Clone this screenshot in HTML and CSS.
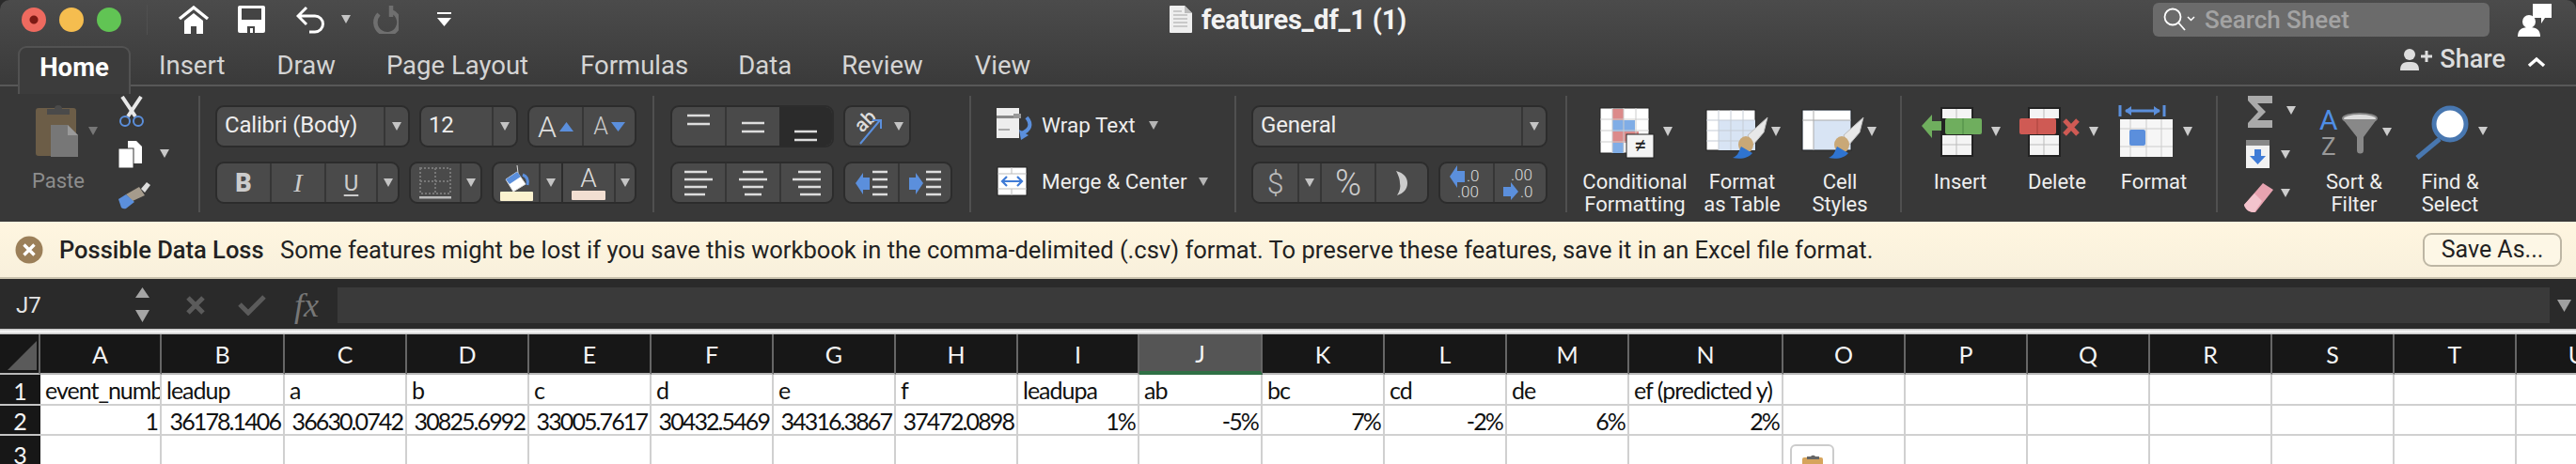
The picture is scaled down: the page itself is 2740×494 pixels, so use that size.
FILE: index.html
```html
<!DOCTYPE html>
<html lang="en">
<head>
<meta charset="utf-8">
<title>features_df_1 (1)</title>
<link rel="stylesheet" href="styles.css">
</head>
<body>
<div class="app">
  <header class="top">
    <div class="titlebar">
      <div class="lights"><span class="light red"></span><span class="light yellow"></span><span class="light green"></span></div>
      <span class="tb-sep"></span>
      <svg class="i-home" width="34" height="30" viewBox="0 0 34 30"><path d="M2 14 17 2l15 12" fill="none" stroke="#fff" stroke-width="3.4"/><path d="M7 16 17 8l10 8v14h-7v-8h-6v8H7z" fill="#fff"/></svg>
      <svg class="i-save" width="29" height="29" viewBox="0 0 29 29"><path d="M2 0h25a2 2 0 0 1 2 2v25a2 2 0 0 1-2 2H2a2 2 0 0 1-2-2V2a2 2 0 0 1 2-2z" fill="#fff"/><rect x="4" y="3" width="21" height="12" fill="#444"/><rect x="10" y="22" width="8" height="7" fill="#444"/><rect x="13" y="24" width="3" height="5" fill="#fff"/></svg>
      <svg class="i-undo" width="32" height="30" viewBox="0 0 32 30"><path d="M11 2 2 11l9 9M2 11h18a8 8 0 0 1 0 17h-6" fill="none" stroke="#fff" stroke-width="3"/></svg>
      <span class="caret c-undo"></span>
      <svg class="i-redo" width="30" height="30" viewBox="0 0 30 30"><path d="M9 9a12.500 12.500 0 1 0 13-3M22 0v12" fill="none" stroke="#6f6f6f" stroke-width="4.500"/></svg>
      <svg class="i-more" width="15" height="16" viewBox="0 0 15 16"><rect width="15" height="2" fill="#fff"/><path d="M0 6h15l-7.500 9z" fill="#fff"/></svg>
      <svg class="i-doc" width="24" height="29" viewBox="0 0 24 29"><path d="M1 0h15l8 8v20a1 1 0 0 1-1 1H1a1 1 0 0 1-1-1V1a1 1 0 0 1 1-1z" fill="#eee"/><path d="M16 0v8h8z" fill="#bbb"/><path d="M4 6h9M4 10h15M4 14h15M4 18h15M4 22h15" stroke="#bdbdbd" stroke-width="1.500"/></svg>
      <span class="doc-title">features_df_1 (1)</span>
      <div class="search">
        <svg width="34" height="26" viewBox="0 0 34 26"><circle cx="10" cy="10" r="8.500" fill="none" stroke="#fff" stroke-width="1.800"/><path d="m16 16 7 8" stroke="#fff" stroke-width="1.800"/><path d="m26 10 3.500 3.500L33 10" fill="none" stroke="#fff" stroke-width="1.500"/></svg>
        <span class="search-text">Search Sheet</span>
      </div>
      <svg class="i-person" width="36" height="36" viewBox="0 0 36 36"><path d="M16 1h20v15h-7l-4 6v-6h-9z" fill="#fff"/><circle cx="12" cy="20" r="7" fill="#fff"/><path d="M0 36c0-8 5-10 12-10s12 2 12 10z" fill="#fff"/></svg>
    </div>
    <div class="tabrow">
      <nav class="tabs">
        <span class="tab active">Home</span>
        <span class="tab t-insert">Insert</span>
        <span class="tab t-draw">Draw</span>
        <span class="tab t-page">Page Layout</span>
        <span class="tab t-form">Formulas</span>
        <span class="tab t-data">Data</span>
        <span class="tab t-rev">Review</span>
        <span class="tab t-view">View</span>
      </nav>
      <div class="share">
        <svg width="34" height="24" viewBox="0 0 34 24"><circle cx="10" cy="7" r="6" fill="#ddd"/><path d="M0 24c0-8 4-9 10-9s10 1 10 9z" fill="#ddd"/><path d="M22 9h12M28 3v12" stroke="#ddd" stroke-width="3"/></svg>
        <span class="share-text">Share</span>
        <svg class="i-chev" width="20" height="12" viewBox="0 0 20 12"><path d="m2 10 8-7 8 7" fill="none" stroke="#fff" stroke-width="3.500"/></svg>
      </div>
    </div>
  </header>

  <section class="ribbon">
    <div class="group g-clip">
      <div class="paste">
        <svg width="48" height="60" viewBox="0 0 48 60"><rect x="0" y="7" width="43" height="51" rx="3" fill="#6c5d47"/><path d="M12 12V8h8a4 4 0 0 1 8 0h8v6H12z" fill="#4a4a4a"/><path d="M16 25h18l11 11v23H16z" fill="#777"/><path d="M34 25v11h11z" fill="#9a9a9a"/></svg>
        <span class="paste-label">Paste</span>
      </div>
      <span class="caret dim c-paste"></span>
      <div class="clip-tools">
        <svg width="54" height="34" viewBox="0 0 54 34"><path d="M4 1l14 21M24 1 10 22" stroke="#e8e8e8" stroke-width="4"/><circle cx="7" cy="27" r="5" fill="none" stroke="#5b8fdc" stroke-width="2"/><circle cx="21" cy="27" r="5" fill="none" stroke="#5b8fdc" stroke-width="2"/></svg>
        <svg width="54" height="30" viewBox="0 0 54 30"><path d="M10 0h9l6 6v18H10z" fill="#fff"/><rect x="0" y="8" width="16" height="21" fill="#fff" stroke="#333"/><path d="M44 9h10l-5 9z" fill="#c8c8c8"/></svg>
        <svg width="54" height="30" viewBox="0 0 54 30"><path d="M24 7l6-7 4 3-6 8z" fill="#ddd"/><path d="M8 13 22 5l6 9-13 6z" fill="#a59b8c"/><path d="M0 18l8-5 9 8-9 7a6 6 0 0 1-5-1z" fill="#5b8fdc"/></svg>
      </div>
    </div>

    <div class="group g-font">
      <div class="rows">
        <div class="row">
          <div class="box"><span class="cell w177 txt">Calibri (Body)</span><span class="cell w26 sep"><span class="caret"></span></span></div>
          <div class="box"><span class="cell w75 txt">12</span><span class="cell w26 sep"><span class="caret"></span></span></div>
          <div class="box">
            <span class="cell w56 gp"><span class="big-a">A</span><svg width="15" height="10" viewBox="0 0 15 10"><path d="M7.500 0 15 10H0z" fill="#5b8fdc"/></svg></span>
            <span class="cell w56 sep gp"><span class="small-a">A</span><svg width="15" height="10" viewBox="0 0 15 10"><path d="M0 0h15L7.500 10z" fill="#5b8fdc"/></svg></span>
          </div>
        </div>
        <div class="row">
          <div class="box">
            <span class="cell w56 bold">B</span>
            <span class="cell w58 sep ital">I</span>
            <span class="cell w55 sep under">U</span>
            <span class="cell w23 sep"><span class="caret"></span></span>
          </div>
          <div class="box">
            <span class="cell w52"><svg width="36" height="36" viewBox="0 0 36 36"><rect x="2" y="2" width="32" height="27" fill="none" stroke="#777" stroke-width="2" stroke-dasharray="2 2"/><path d="M18 2v27M2 16h32" stroke="#777" stroke-width="2" stroke-dasharray="2 2"/><rect x="1" y="32" width="34" height="2.500" fill="#bbb"/></svg></span>
            <span class="cell w22 sep"><span class="caret"></span></span>
          </div>
          <div class="box">
            <span class="cell w48"><svg width="38" height="38" viewBox="0 0 38 38"><path d="M20 0l1 8M8 15l12-8 9 13-13 8z" fill="#fff" stroke="#ddd"/><path d="M8 15l12-8 4 5-12 8z" fill="#5b8fdc"/><path d="M26 10c5 2 6 6 5 11" fill="none" stroke="#5b8fdc" stroke-width="3"/><rect x="2" y="28" width="35" height="10" rx="1" fill="#fbf2cf"/></svg></span>
            <span class="cell w24 sep"><span class="caret"></span></span>
            <span class="cell w56 sep dark gp col"><span class="under-a">A</span><span class="swatch"></span></span>
            <span class="cell w22 sep"><span class="caret"></span></span>
          </div>
        </div>
      </div>
    </div>

    <div class="group g-align">
      <div class="rows">
        <div class="row">
          <div class="box nop">
            <span class="cell w56"><svg width="24" height="36" viewBox="0 0 24 36"><path d="M0 6h24M0 15h24" stroke="#ddd" stroke-width="2.500"/></svg></span>
            <span class="cell w58 sep"><svg width="24" height="36" viewBox="0 0 24 36"><path d="M0 14h24M0 23h24" stroke="#ddd" stroke-width="2.500"/></svg></span>
            <span class="cell w56 sel"><svg width="24" height="36" viewBox="0 0 24 36"><path d="M0 23h24M0 32h24" stroke="#ddd" stroke-width="2.500"/></svg></span>
          </div>
          <div class="box">
            <span class="cell w68 gp-o">
              <svg width="36" height="40" viewBox="0 0 36 40"><text class="ab" transform="translate(12 27) rotate(-45)">ab</text><path d="m10 38 21-25M23 13h9v9" fill="none" stroke="#5b8fdc" stroke-width="2"/></svg>
              <span class="caret"></span>
            </span>
          </div>
        </div>
        <div class="row">
          <div class="box nop">
            <span class="cell w56"><svg width="30" height="28" viewBox="0 0 30 28"><path d="M0 2h24M0 10h30M0 18h24M0 26h22" stroke="#ddd" stroke-width="2.500"/></svg></span>
            <span class="cell w58 sep"><svg width="30" height="28" viewBox="0 0 30 28"><path d="M4 2h22M0 10h30M4 18h22M6 26h18" stroke="#ddd" stroke-width="2.500"/></svg></span>
            <span class="cell w56 sep"><svg width="30" height="28" viewBox="0 0 30 28"><path d="M6 2h24M0 10h30M6 18h24M8 26h22" stroke="#ddd" stroke-width="2.500"/></svg></span>
          </div>
          <div class="box">
            <span class="cell w56"><svg width="34" height="30" viewBox="0 0 34 30"><path d="M8 4v5h7v13H8v5L0 15z" fill="#5b8fdc"/><path d="M18 3h16M18 11h16M18 19h16M18 27h16" stroke="#ddd" stroke-width="2.500"/></svg></span>
            <span class="cell w56 sep"><svg width="34" height="30" viewBox="0 0 34 30"><path d="M7 4v5H0v13h7v5l8-12z" fill="#5b8fdc"/><path d="M18 3h16M18 11h16M18 19h16M18 27h16" stroke="#ddd" stroke-width="2.500"/></svg></span>
          </div>
        </div>
      </div>
    </div>

    <div class="group g-wrap">
      <div class="rows spaced">
        <div class="wrow">
          <svg width="40" height="36" viewBox="0 0 40 36"><rect width="24" height="32" fill="#eee"/><rect y="8" width="18" height="3" fill="#888"/><rect x="2" y="22" width="12" height="2" fill="#aaa"/><path d="M18 6h8v5h-8z" fill="#999"/><path d="M32 10c6 7 4 14-6 17" fill="none" stroke="#5b8fdc" stroke-width="4"/><path d="M24 23l2 11 8-5z" fill="#5b8fdc"/></svg>
          <span class="wtext">Wrap Text</span><span class="caret dim-l c-wrap"></span>
        </div>
        <div class="wrow">
          <svg width="40" height="32" viewBox="0 0 40 32"><rect x="1" y="1" width="31" height="30" fill="#fff" stroke="#222"/><path d="M1 8h31M16 1v7M1 24h31M16 24v7" stroke="#bbb"/><path d="M6 16h21M11 11l-5 5 5 5M22 11l5 5-5 5" fill="none" stroke="#3f7bd6" stroke-width="2.200"/></svg>
          <span class="wtext">Merge &amp; Center</span><span class="caret dim-l c-merge"></span>
        </div>
      </div>
    </div>

    <div class="group g-num">
      <div class="rows">
        <div class="row">
          <div class="box"><span class="cell w285 txt">General</span><span class="cell w26 sep"><span class="caret"></span></span></div>
        </div>
        <div class="row">
          <div class="box">
            <span class="cell w47 cur">$</span>
            <span class="cell w24 sep"><span class="caret"></span></span>
            <span class="cell w58 sep pct">%</span>
            <span class="cell w56 sep"><svg width="16" height="30" viewBox="0 0 16 30"><path d="M2 2c8 2 12 7 12 13 0 6-4 11-11 13 3-5 4-9 3-13 0-4-1-7-4-13z" fill="#ccc"/></svg></span>
          </div>
          <div class="box">
            <span class="cell w56 dec"><svg width="36" height="41" viewBox="0 -2 36 41"><path d="M8 0v6h8v12H8v6L0 12z" fill="#5b8fdc"/><text class="dtx" x="18" y="17">.0</text><text class="dtx" x="8" y="34">.00</text></svg></span>
            <span class="cell w56 sep dec"><svg width="36" height="41" viewBox="0 -2 36 41"><text class="dtx" x="8" y="16">.00</text><path d="M8 18v5H0v10h8v4l8-9z" fill="#5b8fdc"/><text class="dtx" x="18" y="34">.0</text></svg></span>
          </div>
        </div>
      </div>
    </div>

    <div class="group g-styles">
      <div class="big w114">
        <svg width="114" height="60" viewBox="0 0 114 60">
          <rect x="20" y="3" width="52" height="48" fill="#fff" stroke="#222"/>
          <rect x="33" y="4" width="12" height="12" fill="#dc8a8a"/><rect x="33" y="16" width="24" height="12" fill="#80ade6"/><rect x="33" y="28" width="28" height="12" fill="#dc8a8a"/><rect x="33" y="40" width="12" height="11" fill="#80ade6"/>
          <path d="M33 3v48M45 3v48M58 3v48M20 15h52M20 27h52M20 39h52" stroke="#ccc" stroke-width="1"/>
          <rect x="48" y="31" width="29" height="25" fill="#f4f4f4" stroke="#222"/>
          <text class="ne" x="62.500" y="51">≠</text>
          <path d="M87 23h10l-5 10z" fill="#ccc"/>
        </svg>
        <span class="lbl">Conditional<br>Formatting</span>
      </div>
      <div class="big w114">
        <svg width="114" height="60" viewBox="0 0 114 60">
          <rect x="19" y="5" width="52" height="43" fill="#fff" stroke="#222"/>
          <rect x="32" y="16" width="39" height="32" fill="#d8e4f4"/>
          <path d="M32 5v43M45 5v43M58 5v43M19 16h52M19 27h52M19 38h52" stroke="#c5ccd5" stroke-width="1"/>
          <path d="M63 32 84 13 80 29 68 43z" fill="#e8e8e8" stroke="#bbb"/>
          <ellipse cx="61" cy="42" rx="8" ry="9" fill="#c9a877"/>
          <path d="M47 56c6-2 7-8 9-12l12 7c-4 5-12 7-21 5z" fill="#2f74d0"/>
          <path d="M88 23h10l-5 10z" fill="#ccc"/>
        </svg>
        <span class="lbl">Format<br>as Table</span>
      </div>
      <div class="big w94">
        <svg width="94" height="60" viewBox="0 0 94 60">
          <rect x="7" y="5" width="52" height="43" fill="#d8e4f4" stroke="#222"/>
          <rect x="8" y="6" width="50" height="10" fill="#fff"/><rect x="8" y="6" width="11" height="41" fill="#fff"/>
          <path d="M19 5v43M7 16h52" stroke="#aaa" stroke-width="1"/>
          <path d="M51 32 72 13 68 29 56 43z" fill="#e8e8e8" stroke="#bbb"/>
          <ellipse cx="49" cy="42" rx="8" ry="9" fill="#c9a877"/>
          <path d="M35 56c6-2 7-8 9-12l12 7c-4 5-12 7-21 5z" fill="#2f74d0"/>
          <path d="M76 23h10l-5 10z" fill="#ccc"/>
        </svg>
        <span class="lbl">Cell<br>Styles</span>
      </div>
    </div>

    <div class="group g-cells">
      <div class="big w104">
        <svg width="104" height="60" viewBox="0 0 104 60">
          <rect x="31" y="2" width="35" height="53" fill="#222"/><rect x="33" y="4" width="31" height="10" fill="#f4f4f4"/><rect x="33" y="32" width="31" height="21" fill="#f4f4f4"/><path d="M48 4v10M48 32v21M33 42h31" stroke="#bbb"/>
          <rect x="36" y="14" width="39" height="17" rx="2" fill="#6fae5e"/><path d="M55 14v17" stroke="#4f8a45"/>
          <path d="M11 22 22 10v7h10v10H22v8z" fill="#6fae5e"/>
          <path d="M85 23h10l-5 10z" fill="#ccc"/>
        </svg>
        <span class="lbl">Insert</span>
      </div>
      <div class="big w102">
        <svg width="102" height="60" viewBox="0 0 102 60">
          <rect x="20" y="2" width="35" height="53" fill="#222"/><rect x="22" y="4" width="31" height="10" fill="#f4f4f4"/><rect x="22" y="32" width="31" height="21" fill="#f4f4f4"/><path d="M37 4v10M37 32v21M22 42h31" stroke="#bbb"/>
          <rect x="11" y="14" width="39" height="17" rx="2" fill="#cf5a54"/><path d="M30 14v17" stroke="#a8423d"/>
          <path d="m59 16 14 15M73 16 59 31" stroke="#cf5a54" stroke-width="5"/>
          <path d="M85 23h10l-5 10z" fill="#ccc"/>
        </svg>
        <span class="lbl">Delete</span>
      </div>
      <div class="big w104">
        <svg width="104" height="60" viewBox="0 0 104 60">
          <path d="M16 0v12M63 0v12" stroke="#5b8fdc" stroke-width="3"/><path d="M22 6h36" stroke="#5b8fdc" stroke-width="3"/><path d="M28 1l-7 5 7 5zM52 1l7 5-7 5z" fill="#5b8fdc"/>
          <rect x="16" y="15" width="56" height="40" fill="#f6f6f6"/><path d="M27 15v40M44 15v40M60 15v40M16 25h56M16 44h56" stroke="#ccc"/>
          <rect x="26" y="26" width="17" height="17" rx="2" fill="#5b8fdc"/>
          <path d="M83 23h10l-5 10z" fill="#ccc"/>
        </svg>
        <span class="lbl">Format</span>
      </div>
    </div>

    <div class="group g-edit">
      <div class="edit-tools">
        <svg width="70" height="40" viewBox="0 0 70 40"><path d="M11 0h26v8H21l9 9-9 9h16v8H11v-5l11-12-11-12z" fill="#aaa"/><path d="M52 11h10l-5 9z" fill="#ccc"/></svg>
        <svg width="70" height="40" viewBox="0 0 70 40"><rect x="9" y="5" width="25" height="30" fill="#f2f2f2"/><rect x="9" y="5" width="25" height="6" fill="#888"/><path d="M18 15h7v7h5l-8.500 9L13 22h5z" fill="#3f7bd6"/><path d="M46 16h10l-5 9z" fill="#ccc"/></svg>
        <svg width="70" height="40" viewBox="0 0 70 40"><path d="M7 32 27 9l11 7-19 24c-6 1-11-3-12-8z" fill="#e7a3b0"/><path d="M7 32l11-12 8 8-8 12c-5 0-10-3-11-8z" fill="#f3c4cd"/><path d="M46 15h10l-5 9z" fill="#ccc"/></svg>
      </div>
      <div class="big w108">
        <svg width="108" height="60" viewBox="0 0 108 60">
          <text class="sa" x="17" y="26">A</text><text class="sz" x="19" y="53">Z</text>
          <ellipse cx="60" cy="14" rx="18" ry="5" fill="#ddd" stroke="#888" stroke-width="2"/>
          <path d="M42 15h36L64 34v14a3 3 0 0 1-7 0V34z" fill="#888"/>
          <path d="M84 24h10l-5 9z" fill="#ccc"/>
        </svg>
        <span class="lbl">Sort &amp;<br>Filter</span>
      </div>
      <div class="big w96">
        <svg width="96" height="60" viewBox="0 0 96 60">
          <circle cx="48" cy="20" r="17" fill="#fff" stroke="#4877b0" stroke-width="5"/>
          <path d="m37 36-24 20" stroke="#4877b0" stroke-width="5"/>
          <path d="M78 23h10l-5 9z" fill="#ccc"/>
        </svg>
        <span class="lbl">Find &amp;<br>Select</span>
      </div>
    </div>
  </section>

  <section class="banner">
    <svg class="i-warn" width="30" height="30" viewBox="0 0 30 30"><circle cx="15" cy="15" r="14.500" fill="#9b7f59"/><path d="m9.500 9.500 11 11M20.500 9.500l-11 11" stroke="#fff" stroke-width="3.400"/></svg>
    <strong class="b-title">Possible Data Loss</strong>
    <span class="b-text">Some features might be lost if you save this workbook in the comma-delimited (.csv) format. To preserve these features, save it in an Excel file format.</span>
    <button class="saveas" type="button">Save As...</button>
  </section>

  <section class="formula">
    <span class="namebox">J7</span>
    <svg class="i-spin" width="15" height="38" viewBox="0 0 15 38"><path d="M7.500 0 15 11H0zM0 24h15L7.500 37z" fill="#a5a5a5"/></svg>
    <svg class="i-x" width="22" height="22" viewBox="0 0 22 22"><path d="m3 3 16 16M19 3 3 19" stroke="#5b5b5b" stroke-width="5"/></svg>
    <svg class="i-ok" width="30" height="22" viewBox="0 0 30 22"><path d="m2 10 9 9L28 2" fill="none" stroke="#5b5b5b" stroke-width="5"/></svg>
    <span class="fx">fx</span>
    <div class="finput"></div>
    <svg class="i-fdown" width="15" height="13" viewBox="0 0 15 13"><path d="M0 0h15L7.500 13z" fill="#a0a0a0"/></svg>
  </section>

  <div class="splitter"></div>

  <section class="sheet">
    <div class="hd corner"><svg width="31" height="31" viewBox="0 0 31 31"><path d="M31 0v31H0z" fill="#5a5a5a"/></svg></div>
    <div class="hd">A</div><div class="hd">B</div><div class="hd">C</div><div class="hd">D</div><div class="hd">E</div><div class="hd">F</div><div class="hd">G</div><div class="hd">H</div><div class="hd">I</div><div class="hd selcol">J</div><div class="hd">K</div><div class="hd">L</div><div class="hd">M</div><div class="hd">N</div><div class="hd">O</div><div class="hd">P</div><div class="hd">Q</div><div class="hd">R</div><div class="hd">S</div><div class="hd">T</div><div class="hd">U</div>

    <div class="rh">1</div>
    <div class="c">event_number</div><div class="c">leadup</div><div class="c">a</div><div class="c">b</div><div class="c">c</div><div class="c">d</div><div class="c">e</div><div class="c">f</div><div class="c">leadupa</div><div class="c">ab</div><div class="c">bc</div><div class="c">cd</div><div class="c">de</div><div class="c">ef (predicted y)</div><div class="c"></div><div class="c"></div><div class="c"></div><div class="c"></div><div class="c"></div><div class="c"></div><div class="c"></div>

    <div class="rh">2</div>
    <div class="c r">1</div><div class="c r">36178.1406</div><div class="c r">36630.0742</div><div class="c r">30825.6992</div><div class="c r">33005.7617</div><div class="c r">30432.5469</div><div class="c r">34316.3867</div><div class="c r">37472.0898</div><div class="c r">1%</div><div class="c r">-5%</div><div class="c r">7%</div><div class="c r">-2%</div><div class="c r">6%</div><div class="c r">2%</div><div class="c"></div><div class="c"></div><div class="c"></div><div class="c"></div><div class="c"></div><div class="c"></div><div class="c"></div>

    <div class="rh">3</div>
    <div class="c"></div><div class="c"></div><div class="c"></div><div class="c"></div><div class="c"></div><div class="c"></div><div class="c"></div><div class="c"></div><div class="c"></div><div class="c"></div><div class="c"></div><div class="c"></div><div class="c"></div><div class="c"></div><div class="c"></div><div class="c"></div><div class="c"></div><div class="c"></div><div class="c"></div><div class="c"></div><div class="c"></div>

    <div class="pastepop"><svg width="30" height="22" viewBox="0 0 30 22"><rect x="3" y="6" width="22" height="18" rx="2" fill="#d6a45c"/><path d="M8 8V5h4a3 3 0 0 1 5 0h4v3z" fill="#666"/><rect x="14" y="14" width="14" height="10" fill="#fff" stroke="#666"/></svg></div>
  </section>
</div>
</body>
</html>
```

FILE: styles.css
```css
* { box-sizing: border-box; }
html, body { margin: 0; padding: 0; }
body { width: 2740px; height: 494px; overflow: hidden; background: #2a2a2a; font-family: Roboto, "Liberation Sans", sans-serif; }
.app { width: 2740px; height: 494px; display: flex; flex-direction: column; overflow: hidden; }
svg { display: block; flex: none; }

.caret { display: inline-block; width: 0; height: 0; border-left: 5px solid transparent; border-right: 5px solid transparent; border-top: 9px solid #c4c4c4; flex: none; }
.caret.dim { border-top-color: #777; }
.caret.dim-l { border-top-color: #b5b5b5; }

/* title bar */
.top { height: 92px; background: linear-gradient(#4b4b4b, #3a3a3a); border-bottom: 2px solid #585858; border-radius: 10px 10px 0 0; flex: none; }
.titlebar { height: 41px; display: flex; align-items: center; }
.lights { display: flex; gap: 14px; margin-left: 23px; }
.light { width: 26px; height: 26px; border-radius: 50%; }
.light.red { background: radial-gradient(circle, #7d1a14 0 4px, #ee6a5f 5px); }
.light.yellow { background: #f5bd4f; }
.light.green { background: #61c454; }
.tb-sep { width: 1px; height: 32px; margin-left: 27px; background: #505050; }
.i-home { margin-left: 32px; }
.i-save { margin-left: 30px; }
.i-undo { margin-left: 33px; }
.c-undo { margin-left: 16px; }
.i-redo { margin-left: 21px; }
.i-more { margin-left: 41px; }
.i-doc { margin-left: 764px; }
.doc-title { margin-left: 10px; width: 217px; font-size: 29px; font-weight: 700; color: #f2f2f2; white-space: nowrap; letter-spacing: -.2px; }
.search { margin-left: 795px; width: 358px; height: 36px; background: #6b6b6b; border-radius: 6px; display: flex; align-items: center; padding-left: 11px; }
.search-text { margin-left: 10px; font-size: 26px; font-weight: 500; color: #a3a3a3; }
.i-person { margin-left: 30px; }

.tabrow { height: 49px; display: flex; align-items: stretch; }
.tabs { display: flex; margin-left: 19px; }
.tab { font-size: 27.500px; color: #d4d4d4; line-height: 40px; padding-top: 9px; white-space: nowrap; }
.tab.active { width: 120px; height: 51px; margin-top: 8px; padding-top: 0; line-height: 42px; text-align: center; color: #fff; font-weight: 700; background: #3c3c3c; border: 2px solid #525252; border-bottom: 0; border-radius: 9px 9px 0 0; position: relative; z-index: 1; }
.t-insert { margin-left: 30px; }
.t-draw { margin-left: 55px; }
.t-page { margin-left: 54px; }
.t-form { margin-left: 55px; }
.t-data { margin-left: 53px; }
.t-rev { margin-left: 53px; }
.t-view { margin-left: 55px; }
.share { margin-left: auto; display: flex; align-items: center; height: 44px; }
.share-text { margin-left: 8px; font-size: 27px; font-weight: 500; color: #ddd; }
.i-chev { margin-left: 23px; margin-right: 32px; margin-top: 6px; }

/* ribbon */
.ribbon { height: 144px; flex: none; background: #383838; display: flex; padding-top: 10px; align-items: flex-start; }
.group { height: 124px; display: flex; flex: none; border-right: 2px solid #505050; }
.g-clip { width: 213px; }
.g-font { width: 483px; padding: 10px 0 0 16px; }
.g-align { width: 337px; padding: 10px 0 0 17px; }
.g-wrap { width: 282px; padding: 10px 0 0 27px; }
.g-num { width: 352px; padding: 10px 0 0 16px; }
.g-styles { width: 356px; padding: 0 0 0 15px; }
.g-cells { width: 336px; padding: 0 0 0 10px; }
.g-edit { width: 381px; border-right: 0; padding-left: 21px; }

.paste { width: 84px; margin-left: 20px; padding-top: 6px; display: flex; flex-direction: column; align-items: center; }
.paste-label { margin-top: 12px; font-size: 22px; line-height: 26px; color: #8d8d8d; }
.c-paste { margin: 33px 0 0 -10px; }
.clip-tools { margin-left: 22px; display: flex; flex-direction: column; gap: 14px; padding-top: 0; }

.rows { display: flex; flex-direction: column; gap: 15px; }
.rows.spaced { gap: 22px; padding-top: 2px; }
.row { display: flex; gap: 10px; height: 45px; }
.box { display: flex; height: 45px; background: #4a4a4a; border: 2px solid #2c2c2c; border-radius: 9px; overflow: hidden; }
.cell { height: 41px; display: flex; align-items: center; justify-content: center; flex: none; color: #eee; }
.sep { border-left: 2px solid #363636; }
.w22 { width: 22px; } .w23 { width: 23px; } .w24 { width: 24px; } .w26 { width: 26px; }
.w47 { width: 47px; } .w48 { width: 48px; } .w52 { width: 52px; } .w55 { width: 55px; }
.w56 { width: 56px; } .w58 { width: 58px; } .w68 { width: 68px; } .w75 { width: 75px; }
.w177 { width: 177px; } .w285 { width: 285px; }
.txt { justify-content: flex-start; padding: 0 0 3px 8px; font-size: 24px; letter-spacing: -.2px; }
.gp { gap: 3px; }
.gp-o { gap: 10px; }
.big-a { font-size: 32px; line-height: 38px; font-weight: 300; color: #ddd; }
.small-a { font-size: 25px; font-weight: 300; color: #ccc; }
.bold { font-size: 27px; font-weight: 900; color: #ccc; }
.ital { font-family: "Liberation Serif", serif; font-style: italic; font-size: 28px; color: #ccc; }
.under { font-size: 24px; color: #ccc; text-decoration: underline; text-underline-offset: 4px; }
.col { flex-direction: column; gap: 0; }
.dark { border-left-color: #2c2c2c; }
.under-a { font-size: 28px; line-height: 27px; font-weight: 300; color: #ddd; }
.swatch { width: 36px; height: 10px; background: #f2dfd2; border-radius: 1px; }
.sel { background: #2b2b2b; }
.ab { font: 500 21px Roboto, sans-serif; fill: #ddd; }
.wrow { display: flex; align-items: center; height: 38px; }
.wtext { margin-left: 8px; font-size: 22.500px; color: #eee; white-space: nowrap; }
.c-wrap { margin-left: 14px; }
.c-merge { margin-left: 12px; }
.cur { font-size: 32px; line-height: 38px; font-weight: 300; color: #bbb; }
.pct { font-size: 38px; line-height: 40px; font-weight: 300; color: #ccc; }
.dtx { font: 300 17px Roboto, sans-serif; fill: #ddd; }

.big { display: flex; flex-direction: column; align-items: center; padding-top: 10px; flex: none; }
.w94 { width: 94px; } .w96 { width: 96px; } .w102 { width: 102px; } .w104 { width: 104px; } .w108 { width: 108px; } .w114 { width: 114px; }
.lbl { margin-top: 10px; font-size: 22px; line-height: 24px; color: #eee; text-align: center; white-space: nowrap; }
.edit-tools { width: 70px; display: flex; flex-direction: column; gap: 2px; }
.ne { font: 400 24px Roboto, sans-serif; fill: #222; text-anchor: middle; }
.sa { font: 400 30px Roboto, sans-serif; fill: #4f8fe6; }
.sz { font: 400 26px Roboto, sans-serif; fill: #999; }

/* banner */
.banner { height: 61px; flex: none; display: flex; align-items: center; background: linear-gradient(#fff6e0, #f8f0dc); border-bottom: 2px solid #c9c2ae; padding-left: 16px; color: #222; }
.b-title { margin-left: 17px; font-size: 25.500px; font-weight: 500; width: 216px; white-space: nowrap; }
.b-text { margin-left: 19px; font-size: 25.500px; width: 1695px; white-space: nowrap; }
.saveas { margin-left: auto; margin-right: 15px; width: 148px; height: 36px; background: #fdf7e6; border: 2px solid #bdb6a4; border-radius: 9px; font: 400 25px Roboto, sans-serif; color: #222; padding: 0; }

/* formula bar */
.formula { height: 53px; flex: none; display: flex; align-items: center; background: #2a2a2a; padding-top: 3px; }
.namebox { margin-left: 17px; width: 127px; font-size: 24px; color: #e4e4e4; }
.i-spin { margin-left: 0; }
.i-x { margin-left: 38px; }
.i-ok { margin-left: 34px; }
.fx { margin-left: 30px; width: 46px; font: italic 36px "Liberation Serif", serif; color: #777; }
.finput { width: 2353px; height: 38px; background: #3a3a3a; }
.i-fdown { margin-left: 8px; }

.splitter { height: 6px; flex: none; background: linear-gradient(#bbb, #fff 50%, #bbb); }

/* sheet */
.sheet { position: relative; flex: 1; display: grid; background: #fff; overflow: hidden;
  grid-template-columns: 43px 129px 131px 130px 130px 130px 130px 130px 130px 129px 131px 130px 130px 130px 164px 130px 130px 130px 130px 130px 130px 130px;
  grid-template-rows: 43px 33px 32px 40px;
  font-family: Lato, "Liberation Sans", sans-serif; font-size: 25px; }
.hd { background: #171717; color: #f4f4f4; border-right: 2px solid #666; border-bottom: 2px solid #b8b8b8; display: flex; align-items: center; justify-content: center; font-size: 25px; padding-top: 1px; }
.corner { align-items: flex-end; justify-content: flex-start; padding: 0 0 3px 8px; }
.selcol { background: #555; border-bottom: 4px solid #2f6f45; }
.rh { background: #171717; color: #f4f4f4; border-bottom: 2px solid #c4c4c4; display: flex; align-items: center; justify-content: center; font-size: 25px; padding-top: 2px; }
.c { color: #111; border-right: 2px solid #d0d0d0; border-bottom: 2px solid #d0d0d0; padding: 0 5px; overflow: hidden; white-space: nowrap; line-height: 32px; letter-spacing: -1px; }
.c.r { text-align: right; letter-spacing: -1.900px; padding-right: 3px; }
.pastepop { position: absolute; left: 1904px; top: 117px; width: 47px; height: 40px; background: #fff; border: 2px solid #ccc; border-radius: 6px; padding: 6px 0 0 8px; }
```
